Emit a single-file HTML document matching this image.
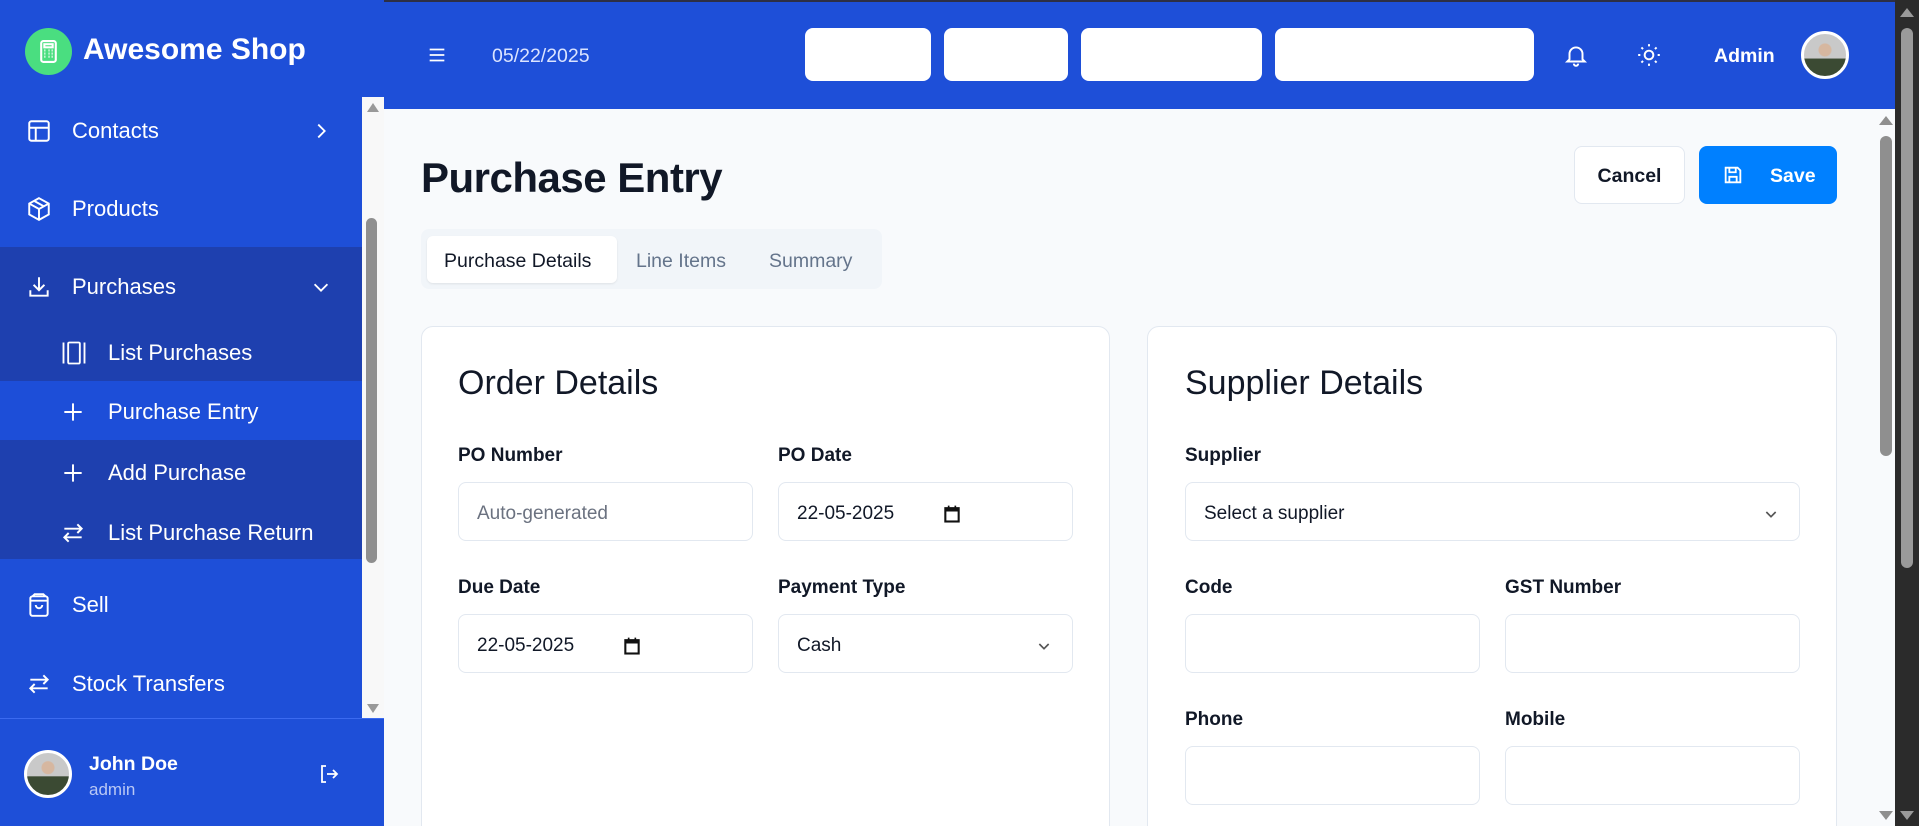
<!DOCTYPE html>
<html style="overflow:hidden"><head><meta charset="utf-8"><style>
*{box-sizing:border-box;margin:0;padding:0}
html,body{width:1919px;height:826px;overflow:hidden}
body{font-family:"Liberation Sans",sans-serif;background:#f8fafc;position:relative}
.abs{position:absolute}
.top{left:0;top:0;width:1895px;height:109px;background:#1e4fd8;border-top:2px solid #2d2f45}
.side{left:0;top:0;width:384px;height:826px;background:#1e4fd8}
.wt{color:#fff}
.item{position:absolute;left:0;width:362px;height:62px;color:#fff;font-size:22px;display:flex;align-items:center}
.item svg{position:absolute;left:26px}
.item span{position:absolute;left:72px}
.sub span{left:108px}
.sub svg{left:60px}
.box{background:#fff;border-radius:8px;position:absolute;top:28px;height:53px}
.card{background:#fff;border:1px solid #e2e8f0;border-radius:12px;position:absolute;top:326px;height:520px}
.lbl{position:absolute;font-size:19px;font-weight:bold;color:#111827}
.inp{position:absolute;height:59px;border:1px solid #e2e8f0;border-radius:8px;background:#fff;font-size:19px;color:#111827;display:flex;align-items:center;padding-left:18px}
</style></head><body>
<div style="position:absolute;left:0;top:0;width:1919px;height:826px;overflow:hidden">
<div class="abs top"></div>
<div class="abs side"></div>
<div class="abs" style="left:25px;top:28px;width:47px;height:47px;border-radius:50%;background:#4ade80"></div>
<svg class="abs" style="left:36px;top:39px" width="25" height="25" viewBox="0 0 24 24" fill="none" stroke="#fff" stroke-width="2"><rect x="5" y="2" width="14" height="20" rx="2"/><rect x="8" y="5" width="8" height="3"/><path d="M8 11h1M12 11h1M15 11h1M8 14h1M12 14h1M15 14h1M8 17h1M12 17h1M15 17h1"/></svg>
<div class="abs wt" style="left:83px;top:33px;font-size:30px;font-weight:bold">Awesome Shop</div>
<div class="abs" style="left:0;top:247px;width:362px;height:312px;background:#1e40af"></div>
<div class="abs" style="left:0;top:381px;width:362px;height:59px;background:#1d4ed8"></div>
<div class="item" style="top:100px"><svg width="26" height="26" viewBox="0 0 24 24" fill="none" stroke="#fff" stroke-width="1.8"><rect x="3" y="3" width="18" height="18" rx="2"/><path d="M3 9h18M9 9v12"/></svg><span>Contacts</span><svg style="left:310px" width="22" height="22" viewBox="0 0 24 24" fill="none" stroke="#fff" stroke-width="2"><path d="M9 5l7 7-7 7"/></svg></div>
<div class="item" style="top:178px"><svg width="26" height="26" viewBox="0 0 24 24" fill="none" stroke="#fff" stroke-width="1.8"><path d="M12 2l9 5v10l-9 5-9-5V7z M3 7l9 5 9-5M12 12v10M7.5 4.5l9 5"/></svg><span>Products</span></div>
<div class="item" style="top:256px"><svg width="26" height="26" viewBox="0 0 24 24" fill="none" stroke="#fff" stroke-width="1.8"><path d="M4 15v5h16v-5M12 3v12M7 10l5 5 5-5"/></svg><span>Purchases</span><svg style="left:310px" width="22" height="22" viewBox="0 0 24 24" fill="none" stroke="#fff" stroke-width="2"><path d="M5 9l7 7 7-7"/></svg></div>
<div class="item sub" style="top:322px"><svg width="28" height="28" viewBox="0 0 24 24" fill="none" stroke="#fff" stroke-width="1.6"><path d="M3 3v18M21 3v18"/><rect x="7" y="3" width="10" height="18" rx="1"/></svg><span>List Purchases</span></div>
<div class="item sub" style="top:381px"><svg width="26" height="26" viewBox="0 0 24 24" fill="none" stroke="#fff" stroke-width="1.8"><path d="M12 4v16M4 12h16"/></svg><span>Purchase Entry</span></div>
<div class="item sub" style="top:442px"><svg width="26" height="26" viewBox="0 0 24 24" fill="none" stroke="#fff" stroke-width="1.8"><path d="M12 4v16M4 12h16"/></svg><span>Add Purchase</span></div>
<div class="item sub" style="top:502px"><svg width="26" height="26" viewBox="0 0 24 24" fill="none" stroke="#fff" stroke-width="1.8"><path d="M4 8h16M16 4l4 4-4 4M20 16H4M8 12l-4 4 4 4"/></svg><span>List Purchase Return</span></div>
<div class="item" style="top:574px"><svg width="26" height="26" viewBox="0 0 24 24" fill="none" stroke="#fff" stroke-width="1.8"><rect x="4" y="4" width="16" height="18" rx="2"/><path d="M4 8h16M9 12a3 3 0 0 0 6 0M6 4l2-2h8l2 2"/></svg><span>Sell</span></div>
<div class="item" style="top:653px"><svg width="26" height="26" viewBox="0 0 24 24" fill="none" stroke="#fff" stroke-width="1.8"><path d="M4 8h16M16 4l4 4-4 4M20 16H4M8 12l-4 4 4 4"/></svg><span>Stock Transfers</span></div>
<div class="abs" style="left:362px;top:97px;width:22px;height:621px;background:#f8f8f8"></div>
<div class="abs" style="left:367px;top:103px;width:0;height:0;border-left:6px solid transparent;border-right:6px solid transparent;border-bottom:9px solid #999"></div>
<div class="abs" style="left:366px;top:218px;width:11px;height:345px;border-radius:6px;background:#8f8f8f"></div>
<div class="abs" style="left:367px;top:704px;width:0;height:0;border-left:6px solid transparent;border-right:6px solid transparent;border-top:9px solid #999"></div>
<div class="abs" style="left:0;top:718px;width:384px;height:108px;background:#1e4fd8;border-top:1px solid #3b6af0"></div>
<div class="abs" style="left:24px;top:750px;width:48px;height:48px;border-radius:50%;border:3px solid #fff;background:radial-gradient(circle at 50% 35%,#d6b7a0 0 6px,transparent 7px),linear-gradient(#c9c9c9 55%,#3b4a33 56%)"></div>
<div class="abs wt" style="left:89px;top:753px;font-size:19.5px;font-weight:bold">John Doe</div>
<div class="abs" style="left:89px;top:780px;font-size:17px;color:#b9c8f5">admin</div>
<svg class="abs" style="left:317px;top:762px" width="24" height="24" viewBox="0 0 24 24" fill="none" stroke="#fff" stroke-width="1.8"><path d="M9 4H5v16h4M10 12h10M16 8l4 4-4 4"/></svg>
<svg class="abs" style="left:426px;top:44px" width="22" height="22" viewBox="0 0 24 24" fill="none" stroke="#fff" stroke-width="2"><path d="M4 6h16M4 12h16M4 18h16"/></svg>
<div class="abs" style="left:492px;top:45px;font-size:19.5px;color:#dbe4ff">05/22/2025</div>
<div class="box" style="left:805px;width:126px"></div>
<div class="box" style="left:944px;width:124px"></div>
<div class="box" style="left:1081px;width:181px"></div>
<div class="box" style="left:1275px;width:259px"></div>
<svg class="abs" style="left:1563px;top:42px" width="26" height="26" viewBox="0 0 24 24" fill="none" stroke="#fff" stroke-width="1.8"><path d="M6 16V11a6 6 0 0 1 12 0v5l2 2H4z M10 20a2 2 0 0 0 4 0"/></svg>
<svg class="abs" style="left:1636px;top:42px" width="26" height="26" viewBox="0 0 24 24" fill="none" stroke="#fff" stroke-width="1.8"><circle cx="12" cy="12" r="4"/><path d="M12 2v2M12 20v2M2 12h2M20 12h2M5 5l1.5 1.5M17.5 17.5L19 19M5 19l1.5-1.5M17.5 6.5L19 5"/></svg>
<div class="abs wt" style="left:1714px;top:45px;font-size:19.5px;font-weight:bold">Admin</div>
<div class="abs" style="left:1801px;top:31px;width:48px;height:48px;border-radius:50%;border:3px solid #fff;background:radial-gradient(circle at 50% 38%,#d6b7a0 0 6px,transparent 7px),linear-gradient(#c9c9c9 58%,#3b4a33 59%)"></div>
<div class="abs" style="left:421px;top:154px;font-size:42px;font-weight:bold;color:#111827;letter-spacing:-0.5px">Purchase Entry</div>
<div class="abs" style="left:1574px;top:146px;width:111px;height:58px;background:#fff;border:1px solid #e2e8f0;border-radius:8px;font-size:19.5px;font-weight:bold;color:#111827;text-align:center;line-height:58px">Cancel</div>
<div class="abs" style="left:1699px;top:146px;width:138px;height:58px;background:#0080ff;border-radius:8px"></div>
<svg class="abs" style="left:1722px;top:164px" width="22" height="22" viewBox="0 0 24 24" fill="none" stroke="#fff" stroke-width="2"><path d="M4 4h13l3 3v13H4z M8 4v5h7V4 M8 20v-6h8v6"/></svg>
<div class="abs wt" style="left:1770px;top:165px;font-size:19.5px;font-weight:bold">Save</div>
<div class="abs" style="left:421px;top:229px;width:461px;height:60px;background:#f1f5f9;border-radius:8px"></div>
<div class="abs" style="left:427px;top:236px;width:190px;height:47px;background:#fff;border-radius:6px;box-shadow:0 1px 2px rgba(0,0,0,.08)"></div>
<div class="abs" style="left:444px;top:250px;font-size:19.5px;color:#111827">Purchase Details</div>
<div class="abs" style="left:636px;top:250px;font-size:19.5px;color:#64748b">Line Items</div>
<div class="abs" style="left:769px;top:250px;font-size:19.5px;color:#64748b">Summary</div>
<div class="card" style="left:421px;width:689px"></div>
<div class="card" style="left:1147px;width:690px"></div>
<div class="abs" style="left:458px;top:364px;font-size:34px;color:#111827">Order Details</div>
<div class="abs" style="left:1185px;top:364px;font-size:34px;color:#111827">Supplier Details</div>
<div class="lbl" style="left:458px;top:445px">PO Number</div>
<div class="lbl" style="left:778px;top:445px">PO Date</div>
<div class="inp" style="left:458px;top:482px;width:295px;color:#6b7280;padding-top:4px">Auto-generated</div>
<div class="inp" style="left:778px;top:482px;width:295px;padding-top:4px">22-05-2025<svg style="margin-left:48px" width="20" height="20" viewBox="0 0 24 24"><rect x="4" y="5" width="16" height="16" fill="none" stroke="#111" stroke-width="2.5"/><rect x="4" y="5" width="16" height="4" fill="#111"/><path d="M8 2v4M16 2v4" stroke="#111" stroke-width="2"/></svg></div>
<div class="lbl" style="left:458px;top:577px">Due Date</div>
<div class="lbl" style="left:778px;top:577px">Payment Type</div>
<div class="inp" style="left:458px;top:614px;width:295px;padding-top:4px">22-05-2025<svg style="margin-left:48px" width="20" height="20" viewBox="0 0 24 24"><rect x="4" y="5" width="16" height="16" fill="none" stroke="#111" stroke-width="2.5"/><rect x="4" y="5" width="16" height="4" fill="#111"/><path d="M8 2v4M16 2v4" stroke="#111" stroke-width="2"/></svg></div>
<div class="inp" style="left:778px;top:614px;width:295px;padding-top:4px">Cash<svg style="position:absolute;right:20px" width="16" height="16" viewBox="0 0 24 24" fill="none" stroke="#555" stroke-width="2.5"><path d="M5 9l7 7 7-7"/></svg></div>
<div class="lbl" style="left:1185px;top:445px">Supplier</div>
<div class="inp" style="left:1185px;top:482px;width:615px;padding-top:4px">Select a supplier<svg style="position:absolute;right:20px" width="16" height="16" viewBox="0 0 24 24" fill="none" stroke="#555" stroke-width="2.5"><path d="M5 9l7 7 7-7"/></svg></div>
<div class="lbl" style="left:1185px;top:577px">Code</div>
<div class="lbl" style="left:1505px;top:577px">GST Number</div>
<div class="inp" style="left:1185px;top:614px;width:295px"></div>
<div class="inp" style="left:1505px;top:614px;width:295px"></div>
<div class="lbl" style="left:1185px;top:709px">Phone</div>
<div class="lbl" style="left:1505px;top:709px">Mobile</div>
<div class="inp" style="left:1185px;top:746px;width:295px"></div>
<div class="inp" style="left:1505px;top:746px;width:295px"></div>
<div class="abs" style="left:1876px;top:109px;width:19px;height:717px;background:#f8fafc"></div>
<div class="abs" style="left:1879px;top:116px;width:0;height:0;border-left:7px solid transparent;border-right:7px solid transparent;border-bottom:9px solid #8f8f8f"></div>
<div class="abs" style="left:1880px;top:136px;width:12px;height:320px;border-radius:6px;background:#8f8f8f"></div>
<div class="abs" style="left:1879px;top:811px;width:0;height:0;border-left:7px solid transparent;border-right:7px solid transparent;border-top:9px solid #8f8f8f"></div>
<div class="abs" style="left:1895px;top:0;width:24px;height:826px;background:#2b2b2b"></div>
<div class="abs" style="left:1900px;top:8px;width:0;height:0;border-left:7px solid transparent;border-right:7px solid transparent;border-bottom:9px solid #9a9a9a"></div>
<div class="abs" style="left:1901px;top:28px;width:12px;height:540px;border-radius:6px;background:#9a9a9a"></div>
<div class="abs" style="left:1900px;top:811px;width:0;height:0;border-left:7px solid transparent;border-right:7px solid transparent;border-top:9px solid #9a9a9a"></div>
</div>
</body></html>
